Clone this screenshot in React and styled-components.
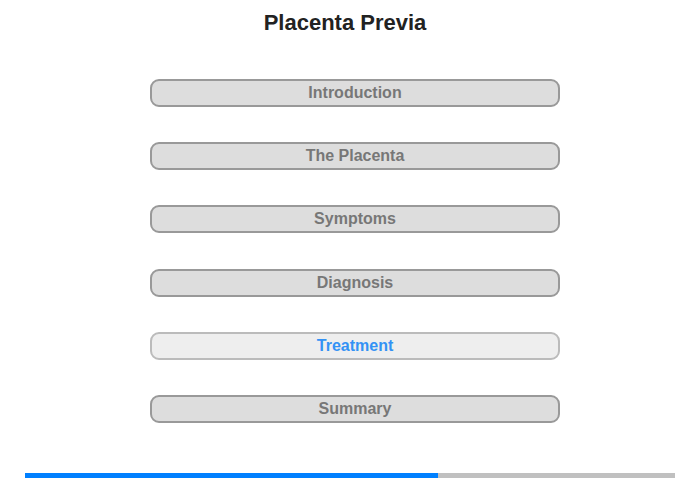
import React from "react";
import styled, { createGlobalStyle } from "styled-components";

const GlobalStyle = createGlobalStyle`
  html, body {
    margin: 0;
    padding: 0;
    background: #fff;
    font-family: "Liberation Sans", Arial, sans-serif;
  }
`;

const Page = styled.div`
  width: 700px;
  height: 480px;
  display: flex;
  flex-direction: column;
  align-items: stretch;
  box-sizing: border-box;
  padding-top: 10px;
`;

const Title = styled.h1`
  margin: 0 0 0 -10px;
  font-size: 22px;
  font-weight: bold;
  color: #222;
  text-align: center;
  line-height: 26px;
`;

const Menu = styled.nav`
  display: flex;
  flex-direction: column;
  gap: 35.2px;
  margin: 43px 0 0 150px;
  width: 410px;
`;

const MenuButton = styled.div`
  height: 28px;
  box-sizing: border-box;
  border: 2px solid ${(p) => (p.$active ? "#bbb" : "#999")};
  background: ${(p) => (p.$active ? "#eee" : "#ddd")};
  border-radius: 9px;
  display: flex;
  align-items: center;
  justify-content: center;
  font-size: 16px;
  font-weight: bold;
  color: ${(p) => (p.$active ? "#3392f5" : "#777")};
  cursor: pointer;
`;

const Progress = styled.div`
  margin: 50px 0 0 25px;
  width: 650px;
  height: 5px;
  background: #c0c0c0;
  display: flex;
`;

const ProgressFill = styled.div`
  height: 100%;
  background: #0080ff;
`;

const items = [
  "Introduction",
  "The Placenta",
  "Symptoms",
  "Diagnosis",
  "Treatment",
  "Summary",
];

const App = () => {
  const active = 4;
  return (
    <Page>
      <GlobalStyle />
      <Title>Placenta Previa</Title>
      <Menu>
        {items.map((item, index) => (
          <MenuButton key={index} $active={index === active}>
            {item}
          </MenuButton>
        ))}
      </Menu>
      <Progress>
        <ProgressFill style={{ width: `${(413 / 650) * 100}%` }} />
      </Progress>
    </Page>
  );
};

export default App;
